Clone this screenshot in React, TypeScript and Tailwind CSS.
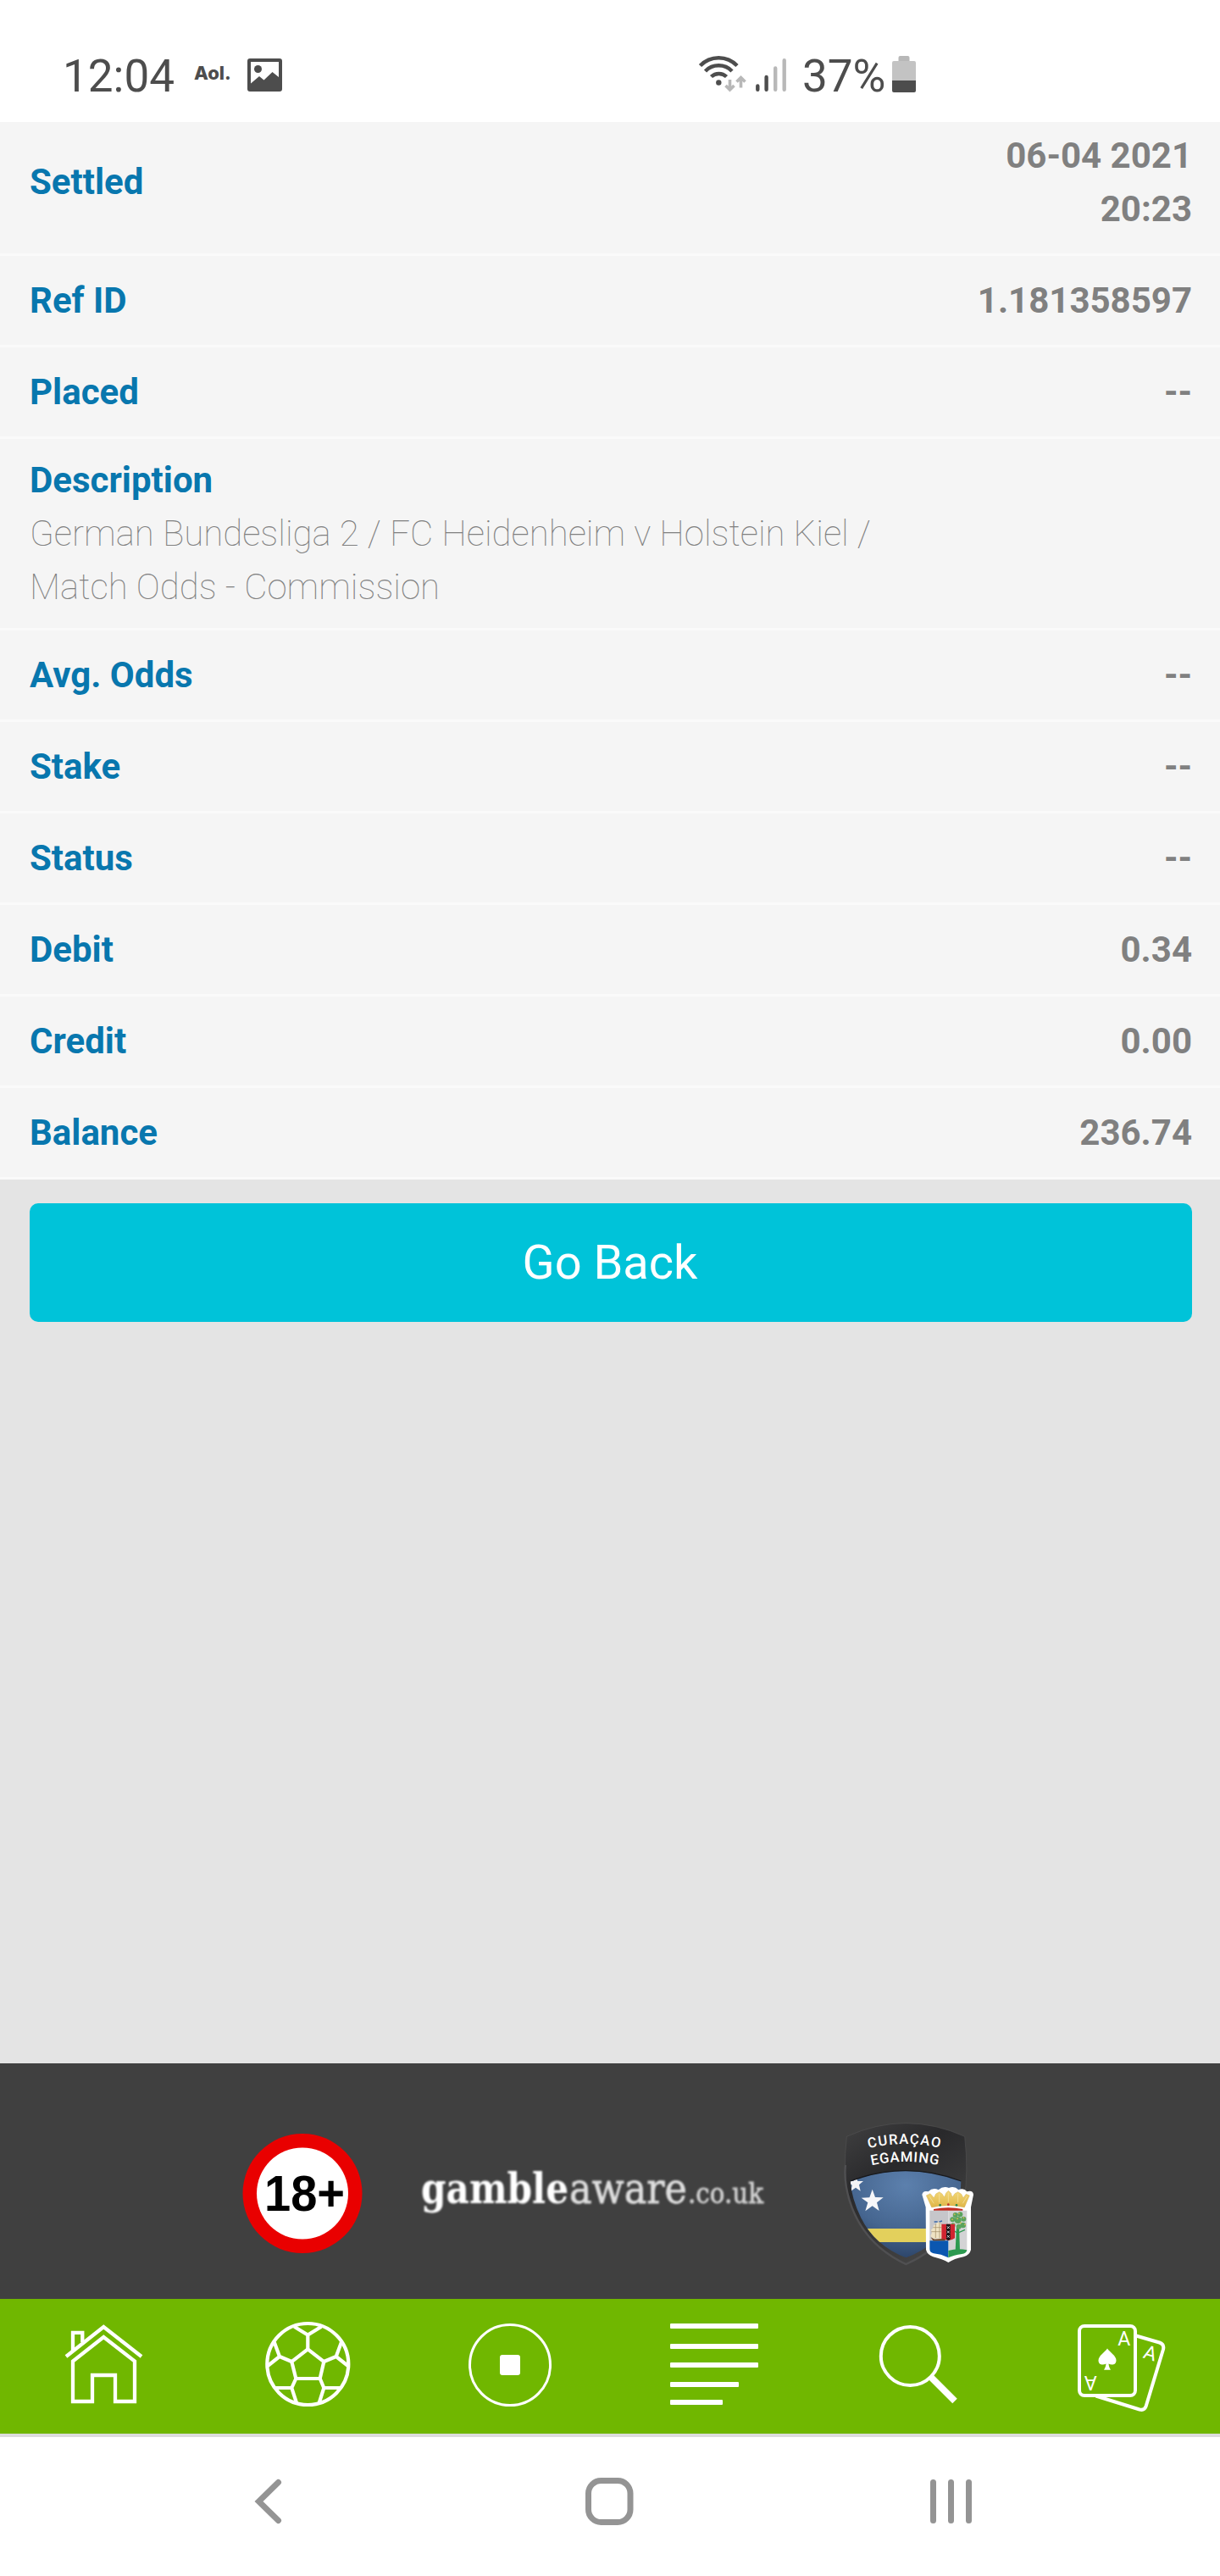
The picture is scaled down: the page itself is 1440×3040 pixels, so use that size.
import React from "react";

interface DetailRow {
  label: string;
  value: string;
}

const topRows: DetailRow[] = [
  { label: "Ref ID", value: "1.181358597" },
  { label: "Placed", value: "--" },
];

const bottomRows: DetailRow[] = [
  { label: "Avg. Odds", value: "--" },
  { label: "Stake", value: "--" },
  { label: "Status", value: "--" },
  { label: "Debit", value: "0.34" },
  { label: "Credit", value: "0.00" },
  { label: "Balance", value: "236.74" },
];

function StatusBar() {
  return (
    <header className="flex h-36 items-start bg-white text-[#4d4d4d]">
      <div className="ml-[74px] mt-[60px] w-[155px] text-[53px] leading-[60px] whitespace-nowrap">
        12:04
      </div>
      <div className="mt-[72px] w-[63px] font-['Inter'] text-[22px] font-extrabold leading-7">
        Aol.
      </div>
      <svg className="mt-[69px] h-[39px] w-[41px]" viewBox="0 0 41 39">
        <path
          fill="#4d4d4d"
          fillRule="evenodd"
          d="M3 0h35a3 3 0 0 1 3 3v33a3 3 0 0 1-3 3H3a3 3 0 0 1-3-3V3a3 3 0 0 1 3-3zM4 4v25.5l10-8.500 5.500 4.500 10-9.500 7.500 6V4z"
        />
        <circle cx="12.500" cy="12.500" r="4.500" fill="#4d4d4d" />
      </svg>

      <svg className="ml-[490px] mt-[64px] h-[46px] w-[60px]" viewBox="823 64 60 46">
        <g fill="none" stroke="#4d4d4d" strokeWidth="4.500">
          <path d="M826.500 77.500a30 30 0 0 1 43.500 0" />
          <path d="M832.500 84a22 22 0 0 1 31.500 0" />
          <path d="M839.500 90.500a13 13 0 0 1 18 0" />
        </g>
        <circle cx="848.300" cy="97.500" r="3.200" fill="#4d4d4d" />
        <g fill="none" stroke="#b8b8b8" strokeWidth="3.600">
          <path d="M861.500 94v12M856.500 101l5 5 5-5" />
          <path d="M874.500 103.500v-12M869.500 96.500l5-5 5 5" />
        </g>
      </svg>
      <svg className="ml-[9px] mt-[68px] h-10 w-[38px]" viewBox="892 68 38 40">
        <g strokeWidth="4.400" strokeLinecap="round">
          <path stroke="#4d4d4d" d="M894.300 101.500v4.300M904.600 91v14.800" />
          <path stroke="#b8b8b8" d="M915.200 80.500v25.300M925.700 71.300v34.500" />
        </g>
      </svg>
      <div className="ml-[17px] mt-[60px] w-[106px] text-[53px] leading-[60px] whitespace-nowrap">
        37%
      </div>
      <svg className="mt-[66px] h-[43px] w-7" viewBox="0 0 28 43">
        <path fill="#b8b8b8" d="M9.500 0h9a2 2 0 0 1 2 2v5h-13V2a2 2 0 0 1 2-2z" />
        <path fill="#c3c3c3" d="M2 6h24a2 2 0 0 1 2 2v22H0V8a2 2 0 0 1 2-2z" />
        <path fill="#4d4d4d" d="M0 29h28v12a2 2 0 0 1-2 2H2a2 2 0 0 1-2-2z" />
      </svg>
    </header>
  );
}

function Row({ label, value }: DetailRow) {
  return (
    <div className="flex h-[108px] items-center justify-between border-b-[3px] border-[#fafafa] pl-[35px] pr-[33px]">
      <span className="text-[#0877ae]">{label}</span>
      <span className="text-[#808080]">{value}</span>
    </div>
  );
}

function BetDetails() {
  return (
    <section className="bg-[#f5f5f5] text-[42px] font-bold leading-[63px]">
      <div className="flex items-center justify-between border-b-[3px] border-[#fafafa] pl-[35px] pr-[33px] pb-[21px] pt-2">
        <span className="pb-[2px] text-[#0877ae]">Settled</span>
        <div className="w-[240px] text-right text-[#808080]">06-04 2021 20:23</div>
      </div>

      {topRows.map((row) => (
        <Row key={row.label} {...row} />
      ))}

      <div className="border-b-[3px] border-[#fafafa] px-[35px] py-[17px]">
        <div className="text-[#0877ae]">Description</div>
        <p className="w-[1020px] font-thin text-[#808080]">
          German Bundesliga 2 / FC Heidenheim v Holstein Kiel / Match Odds - Commission
        </p>
      </div>

      {bottomRows.map((row) => (
        <Row key={row.label} {...row} />
      ))}
    </section>
  );
}

function CuracaoBadge() {
  return (
    <svg className="ml-[87px] mt-[65px] h-[177px] w-40" viewBox="170 60 480 531">
      <defs>
        <linearGradient id="shieldDark" x1="0" y1="0" x2="0.6" y2="1">
          <stop offset="0" stopColor="#404041" />
          <stop offset="0.400" stopColor="#29292b" />
          <stop offset="1" stopColor="#444" />
        </linearGradient>
        <radialGradient id="shieldBlue" cx="0.500" cy="0.200" r="0.800">
          <stop offset="0" stopColor="#5c80ad" />
          <stop offset="0.600" stopColor="#466690" />
          <stop offset="1" stopColor="#2c4468" />
        </radialGradient>
        <linearGradient id="crown" x1="0" y1="0" x2="0" y2="1">
          <stop offset="0" stopColor="#f3d978" />
          <stop offset="1" stopColor="#dfb548" />
        </linearGradient>
        <clipPath id="blueClip">
          <path d="M199 282Q395 208 591 282Q592 340 562 410Q510 510 396 553Q285 510 236 410Q204 345 199 282z" />
        </clipPath>
        <path id="arcTop" d="M264 166Q393 134 522 166" />
        <path id="arcBottom" d="M274 226Q393 200 514 226" />
      </defs>
      <path
        d="M186 124Q395 30 604 124Q618 250 602 350Q568 500 396 578Q238 500 192 345Q172 250 186 124z"
        fill="url(#shieldDark)"
        stroke="#585858"
        strokeWidth="1.500"
      />
      <path d="M182 225Q175 280 196 350Q243 504 396 576Q500 530 552 450" fill="none" stroke="#505052" strokeWidth="7" />
      <g clipPath="url(#blueClip)">
        <rect x="190" y="230" width="410" height="330" fill="url(#shieldBlue)" />
        <rect x="190" y="450" width="410" height="48" fill="#e3d05c" />
        <path fill="#f4f4f6" d="M218 265l7 17 20 0-15 13 5 22-17-12-17 12 4-20-14-15 19 0z" />
      </g>
      <path
        d="M199 282Q395 208 591 282"
        fill="none"
        stroke="#18191c"
        strokeWidth="4"
      />
      <path fill="#f7f7f9" d="M277 311l10 28 29 1-23 18 8 29-24-17-25 18 9-30-23-17 29-1z" />
      <g fill="#fff" fontFamily="Roboto" fontWeight="500">
        <text fontSize="50" textLength="254">
          <textPath href="#arcTop" textLength="254">CURAÇAO</textPath>
        </text>
        <text fontSize="50" textLength="238">
          <textPath href="#arcBottom" textLength="238">EGAMING</textPath>
        </text>
      </g>

      {/* coat of arms */}
      <path
        fill="#fff"
        d="M466 374L453 330Q456 314 475 319Q492 302 511 313Q528 298 548 306Q568 298 582 313Q600 304 612 319Q633 313 635 330L626 374V525Q622 543 600 550Q566 557 546 570Q526 558 492 550Q471 542 467 525z"
      />
      <path
        fill="url(#crown)"
        stroke="#c79a34"
        strokeWidth="1"
        d="M487 375L468 333L482 326L495 341L502 327L514 320L524 327L532 339L538 324L546 316L555 324L560 339L569 326L580 320L592 328L599 341L609 328L621 333L603 375Q545 362 487 375z"
      />
      <path stroke="#f2dc92" strokeWidth="3" fill="none" d="M479 336l16 25M514 327v31M546 323v33M580 327v31M612 336l-15 25" />
      <circle cx="517" cy="367" r="4" fill="#26884c" />
      <circle cx="546" cy="365" r="4" fill="#bf3131" />
      <circle cx="575" cy="367" r="4" fill="#26884c" />
      <path fill="#c22b20" d="M494 381Q546 370 597 381V387H494z" />
      <path fill="#c6c6ca" d="M480 386H546V495H480z" />
      <path fill="#d3d3d5" d="M546 386H612V532H546z" />
      <path fill="#0b57b0" d="M480 493H546V553Q520 540 494 538Q480 535 480 522z" />
      <path fill="#2c9a50" d="M546 528Q580 518 612 526Q610 538 594 540Q565 544 546 553z" />
      <path fill="#2c9a50" d="M575 440h9l3 88h-16z" />
      <g fill="#5aa35d">
        <circle cx="571" cy="402" r="9" />
        <circle cx="588" cy="400" r="9" />
        <circle cx="561" cy="418" r="9" />
        <circle cx="600" cy="416" r="9" />
        <circle cx="580" cy="420" r="12" />
        <circle cx="563" cy="438" r="8" />
        <circle cx="598" cy="438" r="10" />
        <circle cx="583" cy="443" r="9" />
      </g>
      <g fill="#c9b653">
        <circle cx="568" cy="400" r="3" />
        <circle cx="584" cy="397" r="3" />
        <circle cx="560" cy="418" r="3" />
        <circle cx="578" cy="415" r="3" />
        <circle cx="600" cy="412" r="3" />
        <circle cx="590" cy="430" r="3" />
        <circle cx="566" cy="436" r="3" />
        <circle cx="605" cy="436" r="3" />
      </g>
      <path stroke="#2c9a50" strokeWidth="4" fill="none" d="M556 452l23 14 26-12" />
      <path fill="#efe3c4" d="M494 437h10v-9h14v8h8v40l-6 9h-27l-10-8 5-13-3-9 7-7z" />
      <path stroke="#a08a60" strokeWidth="2" fill="none" d="M501 433v50M515 429v55M486 461h34M492 446h30" />
      <path stroke="#3a68a8" strokeWidth="4" d="M496 426h12M514 426l10-3" />
      <path fill="#6d4526" d="M484 481l13 7 30-2 13-5-6 12h-42z" />
      <path fill="#cf2530" d="M522 434H569V484Q558 492 546 492Q534 488 522 486z" />
      <path fill="#18181a" d="M539 434h14v54l-7 4-7-4z" />
      <g stroke="#fff" strokeWidth="2.500">
        <path d="M542 442l8 8m0-8l-8 8M542 458l8 8m0-8l-8 8M542 474l8 8m0-8l-8 8" />
      </g>
    </svg>
  );
}

function Footer() {
  return (
    <footer className="flex h-[278px] items-start bg-[#404040] pl-[286px]">
      <svg className="mt-[82px] h-[143px] w-[142px] blur-[0.6px]" viewBox="0 0 142 143">
        <circle cx="71" cy="71.500" r="70.500" fill="#e90000" />
        <circle cx="71" cy="71.500" r="54" fill="#fff" />
        <text
          x="26"
          y="92"
          fontFamily="Liberation Sans"
          fontWeight="700"
          fontSize="60"
          textLength="95"
          lengthAdjust="spacingAndGlyphs"
        >
          18+
        </text>
      </svg>
      <svg className="ml-[66px] mt-[95px] h-[104px] w-[413px] overflow-visible blur-[0.8px]" viewBox="494 2530 413 104">
        <g fontFamily="DejaVu Serif">
          <text x="497" y="2600" fill="#fff" fontWeight="700" fontSize="51" textLength="174" lengthAdjust="spacingAndGlyphs">
            gamble
          </text>
          <text x="672" y="2600" fill="#dedede" stroke="#dedede" strokeWidth="0.8" fontSize="51" textLength="139" lengthAdjust="spacingAndGlyphs">
            aware
          </text>
          <text x="812" y="2600" fill="#d0d0d0" stroke="#d0d0d0" strokeWidth="0.8" fontSize="33" textLength="89" lengthAdjust="spacingAndGlyphs">
            .co.uk
          </text>
        </g>
      </svg>
      <CuracaoBadge />
    </footer>
  );
}

function BottomNav() {
  return (
    <nav className="grid h-[159px] grid-cols-6 bg-[#70b700]">
      {/* Home */}
      <svg viewBox="0 0 240 159" fill="none" stroke="#fff" strokeWidth="4.300">
        <path d="M78 68L122.300 33L167 68" />
        <path d="M86 61V39.800H97.300V51" />
        <path d="M86 121V73.500L122.300 45L159 73.500V121H136V90H109V121z" />
      </svg>

      {/* Football */}
      <svg viewBox="0 0 240 159" fill="none" stroke="#fff" strokeWidth="4.200">
        <circle cx="123.300" cy="77" r="48" />
        <path d="M123.300 59.300L142.300 74L137.700 94H109.300L104.300 74z" />
        <path d="M107.300 32.700L123.300 42.500L139.300 32.700M123.300 42.500V59.300" />
        <path d="M163 51L156.700 68L170.700 79M156.700 68L142.300 74" />
        <path d="M83.700 51L90 68L76 79M90 68L104.300 74" />
        <path d="M161.700 105H142.300L136.700 122.700M142.300 105L137.700 94" />
        <path d="M85 105H104.300L110 122.700M104.300 105L109.300 94" />
      </svg>

      {/* In play */}
      <svg viewBox="0 0 240 159">
        <circle cx="122" cy="78" r="47.500" fill="none" stroke="#fff" strokeWidth="3" />
        <rect x="110" y="66" width="24" height="24" rx="3" fill="#fff" />
      </svg>

      {/* Markets */}
      <svg viewBox="0 0 240 159" fill="#fff">
        <rect x="71" y="29" width="104" height="6" rx="1" />
        <rect x="71" y="53" width="104" height="6" rx="1" />
        <rect x="71" y="75" width="104" height="6" rx="1" />
        <rect x="71" y="98" width="81" height="6" rx="1" />
        <rect x="71" y="119" width="62" height="6" rx="1" />
      </svg>

      {/* Search */}
      <svg viewBox="0 0 240 159" fill="none" stroke="#fff">
        <circle cx="114.300" cy="67.400" r="34.500" strokeWidth="4" />
        <path strokeWidth="7.800" d="M138.500 92L167 120.500" />
      </svg>

      {/* Casino */}
      <svg viewBox="0 0 240 159">
        <g fill="none" stroke="#fff" strokeWidth="4">
          <rect x="74" y="32" width="66" height="82" rx="6" />
          <path d="M141 43.500L168.500 51.500Q174.500 53.500 173 59.500L152.500 127Q150.500 132 145 130.500L93.500 114.500" />
        </g>
        <path
          fill="#fff"
          d="M107 58.500C110 63 117.500 67 117.500 72.500C117.500 78 112 78.500 108.500 76.500C108.800 79.500 109.500 81.500 111 83.700H103C104.500 81.500 105.200 79.500 105.500 76.500C102 78.500 96.500 78 96.500 72.500C96.500 67 104 63 107 58.500z"
        />
        <g fill="#fff" fontFamily="Roboto" fontSize="23" textAnchor="middle">
          <text x="126.700" y="55">A</text>
          <text transform="translate(87.300 91) rotate(180)">A</text>
          <text transform="translate(155.500 71.500) rotate(17)">A</text>
        </g>
      </svg>
    </nav>
  );
}

function SystemNav() {
  return (
    <div className="flex h-[168px] items-start justify-between border-t-4 border-[#dcdcdc] bg-white px-[277px] pt-[46px]">
      <svg className="h-[60px] w-20" viewBox="0 0 80 60" fill="none" stroke="#949494" strokeWidth="7" strokeLinecap="round">
        <path d="M51.500 7.500L28.500 30L51.500 52.500" />
      </svg>
      <svg className="h-[60px] w-20" viewBox="0 0 80 60" fill="none" stroke="#949494" strokeWidth="7">
        <rect x="14.500" y="5.500" width="49.500" height="49" rx="15" />
      </svg>
      <svg className="h-[60px] w-20" viewBox="0 0 80 60" stroke="#949494" strokeWidth="7" strokeLinecap="round">
        <path d="M18.500 7.500v45M39.500 7.500v45M60.500 7.500v45" />
      </svg>
    </div>
  );
}

export default function App() {
  return (
    <div className="flex h-[3040px] w-[1440px] flex-col overflow-hidden bg-[#e4e4e4] font-['Roboto',sans-serif]">
      <StatusBar />
      <BetDetails />
      <main className="flex-1 pl-[35px] pr-[33px] pt-[28px]">
        <button
          type="button"
          className="h-[140px] w-full rounded-[10px] bg-[#00c3d9] pr-[2px] text-[56px] leading-none text-white"
        >
          Go Back
        </button>
      </main>
      <Footer />
      <BottomNav />
      <SystemNav />
    </div>
  );
}
